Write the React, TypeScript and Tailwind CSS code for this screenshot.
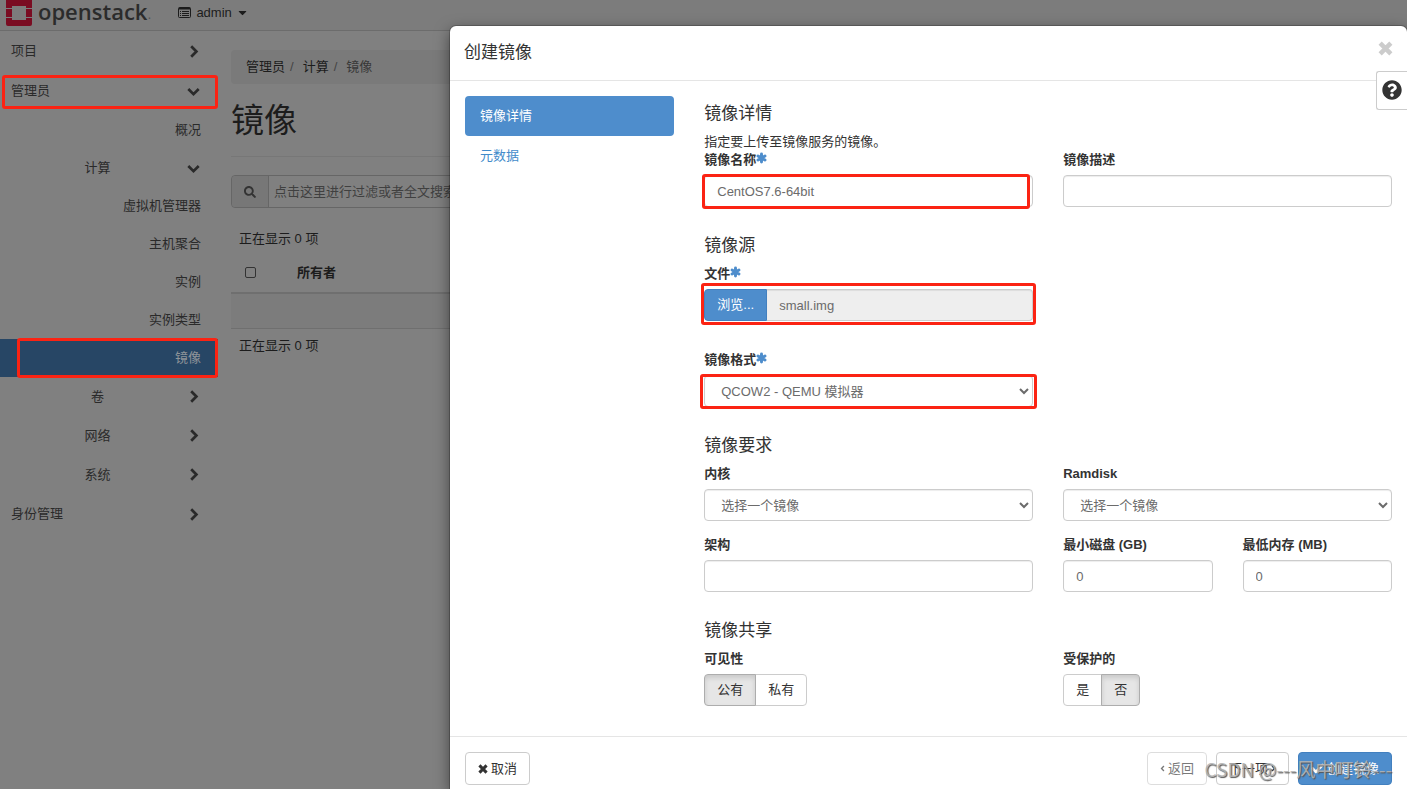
import { useState, type ReactNode } from "react";
import {
  FaAngleLeft,
  FaAngleRight,
  FaCaretDown,
  FaCheck,
  FaQuestionCircle,
  FaSearch,
} from "react-icons/fa";
import clsx from "clsx";

type NavItem = {
  label: string;
  level: "panel" | "group" | "leaf";
  open?: boolean;
  active?: boolean;
  marked?: boolean;
};

const navItems: NavItem[] = [
  { label: "项目", level: "panel" },
  { label: "管理员", level: "panel", open: true, marked: true },
  { label: "概况", level: "leaf" },
  { label: "计算", level: "group", open: true },
  { label: "虚拟机管理器", level: "leaf" },
  { label: "主机聚合", level: "leaf" },
  { label: "实例", level: "leaf" },
  { label: "实例类型", level: "leaf" },
  { label: "镜像", level: "leaf", active: true, marked: true },
  { label: "卷", level: "group" },
  { label: "网络", level: "group" },
  { label: "系统", level: "group" },
  { label: "身份管理", level: "panel" },
];

const inputClass =
  "block h-[32px] w-full rounded border border-[#ccc] bg-white px-3 text-[13px] text-[#6b6b6b] shadow-[inset_0_1px_1px_rgba(0,0,0,0.075)] outline-none";

const Mark = ({ className }: { className: string }) => (
  <span
    className={clsx(
      "pointer-events-none absolute rounded-[3px] border-3 border-[#fb2313]",
      className
    )}
  />
);

const Chevron = ({ open }: { open?: boolean }) => (
  <svg width="13" height="13" viewBox="0 0 13 13" fill="none" stroke="currentColor" strokeWidth="2.7">
    <path d={open ? "M1.3 4 6.5 9.2 11.7 4" : "M4.2 1.3 9.4 6.5 4.2 11.7"} />
  </svg>
);

const Times = ({ size }: { size: number }) => (
  <svg
    width={size}
    height={size}
    viewBox="0 0 14 14"
    stroke="currentColor"
    strokeWidth="4.2"
    strokeLinejoin="round"
  >
    <path d="M2 2l10 10M12 2L2 12" />
  </svg>
);

const Asterisk = () => (
  <svg
    width="11"
    height="12"
    viewBox="0 0 12 12"
    stroke="currentColor"
    strokeWidth="3.2"
    strokeLinecap="round"
    className="mt-px text-[#4e8dcc]"
  >
    <path d="M6 1.6v8.8M2.2 3.8l7.6 4.4M9.8 3.8L2.2 8.2" />
  </svg>
);

const ListIcon = () => (
  <svg width="13" height="11" viewBox="0 0 13 11" fill="none" stroke="currentColor">
    <rect x=".5" y=".5" width="12" height="10" rx="1" />
    <path d="M1 1.5h11" strokeWidth="2" />
    <path d="M2 4.5h1M4 4.5h7M2 6.5h1M4 6.5h7M2 8.5h1M4 8.5h7" />
  </svg>
);

const Logo = () => (
  <svg width="26" height="26" viewBox="0 0 26 26" fill="#7a0c22">
    <path d="M0 8V0h26v8h-6V6H6v2z" />
    <path d="M0 9h6v8H0zM20 9h6v8h-6z" />
    <path d="M0 18h6v2h14v-2h6v6a2 2 0 0 1-2 2H2a2 2 0 0 1-2-2z" />
  </svg>
);

const SideNav = () => (
  <nav className="w-[218px] shrink-0">
    <ul>
      {navItems.map((item) => (
        <li key={item.label} className="relative">
          <a
            href="#"
            className={clsx(
              "flex items-center",
              item.level === "panel" && "h-[40px] justify-between pr-[18px] pl-[11px]",
              item.level === "group" && (item.open ? "h-[38px]" : "h-[39px]"),
              item.level === "group" && "justify-between pr-[18px] pl-[64px]",
              item.level === "leaf" && "h-[38px] justify-end pr-[17px]",
              item.active ? "bg-[#274665] text-[#8f9499]" : "text-[#2a2a2a]"
            )}
          >
            <span className={clsx(item.level === "group" && "w-[67px] text-center")}>
              {item.label}
            </span>
            {item.level !== "leaf" && <Chevron open={item.open} />}
          </a>
          {item.marked && (
            <Mark
              className={
                item.active
                  ? "-inset-y-px right-0 left-[17px]"
                  : "top-[4px] right-0 bottom-[2px] left-[2px]"
              }
            />
          )}
        </li>
      ))}
    </ul>
  </nav>
);

const Page = () => (
  <div className="col-start-1 row-start-1 min-w-0 bg-[#808080] text-[#1c1c1c]">
    <header className="flex h-[31px] items-start border-b border-[#6c6c6c] bg-[#7c7c7c] pl-[6px]">
      <a href="#" className="flex items-start text-[#2b2b2b]">
        <Logo />
        <span className="ml-[6px] font-['Open_Sans'] text-[22px] leading-[22px] font-semibold">
          openstack
        </span>
        <span className="text-[14px] leading-[28px] text-[#555]">.</span>
      </a>
      <button className="ml-[27px] flex h-[25px] items-center text-[#1c1c1c]">
        <ListIcon />
        <span className="mr-1 ml-[5px]">admin</span>
        <FaCaretDown size={13} />
      </button>
    </header>
    <div className="flex">
      <SideNav />
      <main className="min-w-0 grow pr-[15px] pl-[13px] pt-[19px]">
        <ol className="flex h-[34px] items-center rounded bg-[#7a7a7a] px-[15px]">
          <li>
            <a href="#">管理员</a>
            <span className="px-[5px] text-[#444]">/</span>
          </li>
          <li className="ml-1">
            <a href="#">计算</a>
            <span className="px-[5px] text-[#444]">/</span>
          </li>
          <li className="ml-1 text-[#383838]">镜像</li>
        </ol>
        <h1 className="mt-[17px] border-b border-[#777] pb-[15px] text-[33px] leading-[40px]">
          镜像
        </h1>
        <div className="mt-[18px] flex h-[33px] rounded border border-[#666]">
          <span className="flex w-[36px] items-center justify-center rounded-l bg-[#777] text-[#333]">
            <FaSearch size={12} />
          </span>
          <input
            type="text"
            aria-label="过滤"
            placeholder="点击这里进行过滤或者全文搜索。"
            className="grow border-l border-[#666] px-[5px] placeholder:text-[#404040]"
          />
        </div>
        <p className="mt-[22px] px-2">正在显示 0 项</p>
        <table className="mt-[5px] w-full text-left">
          <thead>
            <tr className="h-[40px] border-b-2 border-[#6f6f6f]">
              <th className="w-[58px] pl-[14px]">
                <input
                  type="checkbox"
                  aria-label="全选"
                  className="block size-[11px] appearance-none rounded-[2px] border border-[#333]"
                />
              </th>
              <th className="px-2 font-bold">所有者</th>
            </tr>
          </thead>
          <tbody>
            <tr className="h-[35px] border-b border-[#6f6f6f] bg-[#7c7c7c]">
              <td colSpan={2} />
            </tr>
          </tbody>
        </table>
        <p className="mt-[8px] px-2">正在显示 0 项</p>
      </main>
    </div>
  </div>
);

type FieldProps = { id: string; label: string; required?: boolean; children: ReactNode };

const Field = ({ id, label, required, children }: FieldProps) => (
  <div>
    <label htmlFor={id} className="mb-[6px] flex h-[18px] font-bold">
      {label}
      {required && <Asterisk />}
    </label>
    <div className="relative">{children}</div>
  </div>
);

const Heading = ({ children }: { children: ReactNode }) => (
  <h4 className="mb-[10px] text-[17px] leading-[18px]">{children}</h4>
);

type ToggleProps = {
  label: string;
  options: string[];
  value: string;
  onChange: (value: string) => void;
};

const Toggle = ({ label, options, value, onChange }: ToggleProps) => (
  <div role="group" aria-label={label}>
    <div className="mb-[6px] font-bold">{label}</div>
    <div className="flex">
      {options.map((option) => (
        <button
          key={option}
          type="button"
          aria-pressed={option === value}
          onClick={() => onChange(option)}
          className={clsx(
            "-ml-px h-[32px] border px-3 first:ml-0 first:rounded-l last:rounded-r",
            option === value
              ? "z-10 border-[#adadad] bg-[#e6e6e6] shadow-[inset_0_3px_5px_rgba(0,0,0,0.125)]"
              : "border-[#ccc] bg-white"
          )}
        >
          {option}
        </button>
      ))}
    </div>
  </div>
);

const ImageForm = () => {
  const [visibility, setVisibility] = useState("公有");
  const [isProtected, setIsProtected] = useState("否");

  return (
    <form className="flex w-3/4 flex-col gap-[30px] px-[15px] pt-[24px] pb-[30px]">
      <section>
        <Heading>镜像详情</Heading>
        <p>指定要上传至镜像服务的镜像。</p>
        <div className="grid grid-cols-2 gap-[30px]">
          <Field id="name" label="镜像名称" required>
            <input id="name" type="text" defaultValue="CentOS7.6-64bit" className={inputClass} />
            <Mark className="-top-px right-[3px] -bottom-[2px] -left-[2px]" />
          </Field>
          <Field id="description" label="镜像描述">
            <input id="description" type="text" className={inputClass} />
          </Field>
        </div>
      </section>

      <section>
        <Heading>镜像源</Heading>
        <div className="grid grid-cols-2 gap-x-[30px] gap-y-[30px]">
          <Field id="file" label="文件" required>
            <div className="flex">
              <button
                type="button"
                className="h-[32px] w-[63px] shrink-0 rounded-l border border-[#4280bf] bg-[#4e8dcc] text-white"
              >
                浏览...
              </button>
              <input
                id="file"
                type="text"
                readOnly
                defaultValue="small.img"
                className="h-[32px] min-w-0 grow rounded-r border border-l-0 border-[#ccc] bg-[#eee] px-3 text-[#6b6b6b] shadow-[inset_0_1px_1px_rgba(0,0,0,0.075)] outline-none"
              />
            </div>
            <Mark className="-top-[6px] -right-[3px] -bottom-[4px] -left-[3px]" />
          </Field>
          <div className="col-start-1">
            <Field id="format" label="镜像格式" required>
              <select id="format" className={inputClass}>
                <option>QCOW2 - QEMU 模拟器</option>
              </select>
              <Mark className="-inset-x-[4px] -top-px -bottom-[2px]" />
            </Field>
          </div>
        </div>
      </section>

      <section>
        <Heading>镜像要求</Heading>
        <div className="grid grid-cols-2 gap-x-[30px] gap-y-[15px]">
          <Field id="kernel" label="内核">
            <select id="kernel" className={inputClass}>
              <option>选择一个镜像</option>
            </select>
          </Field>
          <Field id="ramdisk" label="Ramdisk">
            <select id="ramdisk" className={inputClass}>
              <option>选择一个镜像</option>
            </select>
          </Field>
          <Field id="arch" label="架构">
            <input id="arch" type="text" className={inputClass} />
          </Field>
          <div className="grid grid-cols-2 gap-[30px]">
            <Field id="min-disk" label="最小磁盘 (GB)">
              <input id="min-disk" type="text" defaultValue="0" className={inputClass} />
            </Field>
            <Field id="min-ram" label="最低内存 (MB)">
              <input id="min-ram" type="text" defaultValue="0" className={inputClass} />
            </Field>
          </div>
        </div>
      </section>

      <section>
        <Heading>镜像共享</Heading>
        <div className="grid grid-cols-2 gap-[30px]">
          <Toggle
            label="可见性"
            options={["公有", "私有"]}
            value={visibility}
            onChange={setVisibility}
          />
          <Toggle
            label="受保护的"
            options={["是", "否"]}
            value={isProtected}
            onChange={setIsProtected}
          />
        </div>
      </section>
    </form>
  );
};

const footerButton = "flex h-[33px] items-center gap-[3px] rounded border px-3";

const CreateImageModal = () => (
  <div className="col-start-1 row-start-1 flex min-w-0 pt-[26px] pl-[450px]">
    <div
      role="dialog"
      aria-label="创建镜像"
      className="relative flex grow flex-col rounded-t-[6px] bg-white shadow-[0_5px_15px_rgba(0,0,0,0.5),0_0_0_1px_rgba(0,0,0,0.2)]"
    >
      <div className="flex h-[55px] items-center justify-between border-b border-[#e5e5e5] px-[14px]">
        <h3 className="text-[17px] leading-[18px]">创建镜像</h3>
        <button aria-label="关闭" className="mb-[9px] text-[#ccc]">
          <Times size={15} />
        </button>
      </div>
      <button
        aria-label="帮助"
        className="absolute top-[45px] right-0 flex h-[39px] w-[31px] items-center justify-center rounded-l-[3px] border border-r-0 border-[#ccc] bg-white pb-px"
      >
        <FaQuestionCircle size={20} />
      </button>
      <div className="flex grow">
        <ul className="w-1/4 px-[15px] pt-[15px]">
          <li>
            <a
              href="#"
              className="flex h-[40px] items-center rounded bg-[#4e8dcc] px-[15px] text-white"
            >
              镜像详情
            </a>
          </li>
          <li>
            <a href="#" className="flex h-[40px] items-center rounded px-[15px] text-[#428bca]">
              元数据
            </a>
          </li>
        </ul>
        <ImageForm />
      </div>
      <div className="flex h-[53px] items-start gap-[9px] border-t border-[#e5e5e5] px-[15px] pt-[15px]">
        <button className={clsx(footerButton, "mr-auto border-[#ccc]")}>
          <Times size={10} />
          取消
        </button>
        <button disabled className={clsx(footerButton, "border-[#ccc] opacity-65")}>
          <FaAngleLeft size={9} className="-mx-[2px]" />
          返回
        </button>
        <button className={clsx(footerButton, "border-[#ccc]")}>
          下一项
          <FaAngleRight size={9} className="-mx-[2px]" />
        </button>
        <button className={clsx(footerButton, "border-[#4280bf] bg-[#4e8dcc] text-white")}>
          <FaCheck size={13} />
          创建镜像
        </button>
      </div>
      <span className="pointer-events-none absolute right-[15px] bottom-[7px] font-['Noto_Sans_CJK_SC',sans-serif] text-[19px] leading-[26px] whitespace-nowrap text-[#b4b4b4]/90 [text-shadow:1px_1px_1px_#555]">
        CSDN @---风中叮铃---
      </span>
    </div>
  </div>
);

export default function App() {
  return (
    <div className="grid min-h-screen grid-cols-1 font-['Liberation_Sans','Noto_Sans_CJK_SC',sans-serif] text-[13px] leading-[18px] text-[#333]">
      <Page />
      <CreateImageModal />
    </div>
  );
}
